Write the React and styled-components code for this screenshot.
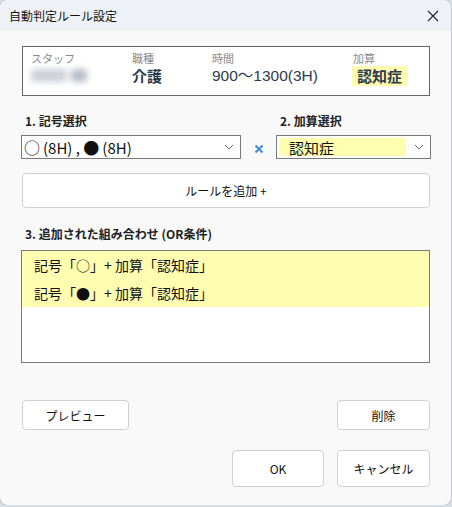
import React from "react";
import styled, { createGlobalStyle } from "styled-components";

const GlobalStyle = createGlobalStyle`
  html, body {
    margin: 0;
    padding: 0;
    background: #d9dee3;
  }
  body {
    font-family: "Noto Sans CJK JP", "Noto Sans", sans-serif;
    color: #111;
  }
`;

const Window = styled.div`
  width: 451px;
  height: 505px;
  background: #f9f9f9;
  border-radius: 8px;
  overflow: hidden;
  display: flex;
  flex-direction: column;
  box-shadow: 0 0 0 1px #c4c8cc;
`;

const TitleBar = styled.div`
  height: 31px;
  flex: none;
  background: #eef2f7;
  display: flex;
  align-items: center;
  justify-content: space-between;
  padding: 0 9px 0 9px;
  font-size: 12px;
`;

const CloseButton = styled.div`
  width: 14px;
  height: 14px;
  display: flex;
  align-items: center;
  justify-content: center;
  margin-right: 2px;
`;

const Body = styled.div`
  padding: 15px 21px 0 22px;
  display: flex;
  flex-direction: column;
`;

const InfoBox = styled.div`
  height: 50px;
  box-sizing: border-box;
  border: 1px solid #666;
  background: #fff;
  display: grid;
  grid-template-columns: 101px 80px 141px 1fr;
  padding: 3px 8px 0;
`;

const InfoCell = styled.div`
  display: flex;
  flex-direction: column;
`;

const InfoLabel = styled.div`
  font-size: 11px;
  line-height: 16px;
  color: #8a8a8a;
`;

const InfoValue = styled.div`
  font-size: 15px;
  line-height: 20px;
  font-weight: 700;
  color: #2d3b4f;
  align-self: flex-start;
  padding: 0 ${(p) => (p.$hl ? "5px" : "0")};
  background: ${(p) => (p.$hl ? "#fffbb0" : "transparent")};
  margin-left: ${(p) => (p.$hl ? "-1px" : "0")};
`;

const ValueNumber = styled(InfoValue)`
  font-family: "Liberation Sans", "Noto Sans CJK JP", sans-serif;
  font-weight: 400;
  font-size: 15.5px;
`;

const Blurred = styled.div`
  margin-top: 3px;
  display: flex;
  gap: 4px;
  filter: blur(3px);
`;

const Blob = styled.div`
  width: ${(p) => p.$w}px;
  height: 13px;
  background: ${(p) => p.$c};
  border-radius: 4px;
`;

const SelectRow = styled.div`
  display: grid;
  grid-template-columns: 220px 35px 155px;
  align-items: end;
  margin-top: 17px;
  margin-left: -1px;
`;

const FieldLabel = styled.div`
  font-size: 12px;
  font-weight: 700;
  line-height: 16px;
  padding-left: 4px;
  margin-bottom: 6px;
  color: #222;
`;

const SelectBox = styled.div`
  height: 24px;
  box-sizing: border-box;
  border: 1px solid #7a7a7a;
  background: #fff;
  display: flex;
  align-items: center;
  padding: 0 6px 0 2px;
  font-size: 15px;
`;

const SelectText = styled.div`
  flex: 1;
  display: flex;
  align-items: center;
  height: 18px;
  white-space: pre;
  padding-left: ${(p) => (p.$hl ? "10px" : "0")};
  background: ${(p) => (p.$hl ? "#ffffb0" : "transparent")};
  margin-right: ${(p) => (p.$hl ? "8px" : "0")};
`;

const Mark = styled.span`
  font-size: 16px;
  margin-right: 3px;
`;

const Times = styled.div`
  height: 24px;
  display: flex;
  align-items: center;
  justify-content: center;
  padding-top: 4px;
  box-sizing: border-box;
`;

const PlainButton = styled.div`
  box-sizing: border-box;
  height: ${(p) => p.$h || 30}px;
  width: ${(p) => (p.$w ? `${p.$w}px` : "auto")};
  border: 1px solid #d0d0d0;
  border-radius: 4px;
  background: #fff;
  display: flex;
  align-items: center;
  justify-content: center;
  font-size: 12px;
  color: #111;
`;

const AddButton = styled(PlainButton)`
  margin-top: 14px;
`;

const SectionLabel = styled(FieldLabel)`
  margin-top: 18px;
  margin-bottom: 8px;
  padding-left: 3px;
`;

const ListBox = styled.div`
  height: 113px;
  box-sizing: border-box;
  border: 1px solid #7a7a7a;
  background: #fff;
  margin-left: -1px;
`;

const ListRow = styled.div`
  height: 28px;
  background: #fffdb0;
  display: flex;
  align-items: center;
  padding-left: 12px;
  font-size: 14px;
`;

const ButtonRow = styled.div`
  display: flex;
  justify-content: space-between;
  margin-top: 37px;
`;

const Footer = styled.div`
  display: flex;
  justify-content: flex-end;
  gap: 13px;
  margin-top: 20px;
`;

function Chevron() {
  return (
    <svg width="10" height="6" viewBox="0 0 10 6">
      <path d="M1 1l4 4 4-4" fill="none" stroke="#666" strokeWidth="1" />
    </svg>
  );
}

function App() {
  return (
    <>
      <GlobalStyle />
      <Window>
        <TitleBar>
          <span>自動判定ルール設定</span>
          <CloseButton>
            <svg width="12" height="12" viewBox="0 0 12 12">
              <path d="M1 1l10 10M11 1L1 11" stroke="#222" strokeWidth="1.1" />
            </svg>
          </CloseButton>
        </TitleBar>
        <Body>
          <InfoBox>
            <InfoCell>
              <InfoLabel>スタッフ</InfoLabel>
              <Blurred>
                <Blob $w={36} $c="#cdd0d8" />
                <Blob $w={16} $c="#b8bcc6" />
              </Blurred>
            </InfoCell>
            <InfoCell>
              <InfoLabel>職種</InfoLabel>
              <InfoValue>介護</InfoValue>
            </InfoCell>
            <InfoCell>
              <InfoLabel>時間</InfoLabel>
              <ValueNumber>900〜1300(3H)</ValueNumber>
            </InfoCell>
            <InfoCell>
              <InfoLabel>加算</InfoLabel>
              <InfoValue $hl>認知症</InfoValue>
            </InfoCell>
          </InfoBox>

          <SelectRow>
            <div>
              <FieldLabel>1. 記号選択</FieldLabel>
              <SelectBox>
                <SelectText>
                  <Mark>○</Mark>{"(8H) , "}<Mark>●</Mark>{"(8H)"}
                </SelectText>
                <Chevron />
              </SelectBox>
            </div>
            <Times>
              <svg width="10" height="10" viewBox="0 0 10 10">
                <path d="M1.5 1.5l7 7M8.5 1.5l-7 7" stroke="#3b8fdc" strokeWidth="2" />
              </svg>
            </Times>
            <div>
              <FieldLabel>2. 加算選択</FieldLabel>
              <SelectBox>
                <SelectText $hl>認知症</SelectText>
                <Chevron />
              </SelectBox>
            </div>
          </SelectRow>

          <AddButton $h={35}>ルールを追加 +</AddButton>

          <SectionLabel>3. 追加された組み合わせ (OR条件)</SectionLabel>
          <ListBox>
            <ListRow>記号「○」+ 加算「認知症」</ListRow>
            <ListRow>記号「●」+ 加算「認知症」</ListRow>
          </ListBox>

          <ButtonRow>
            <PlainButton $w={107}>プレビュー</PlainButton>
            <PlainButton $w={93}>削除</PlainButton>
          </ButtonRow>

          <Footer>
            <PlainButton $w={92} $h={37}>OK</PlainButton>
            <PlainButton $w={93} $h={37}>キャンセル</PlainButton>
          </Footer>
        </Body>
      </Window>
    </>
  );
}

export default App;
